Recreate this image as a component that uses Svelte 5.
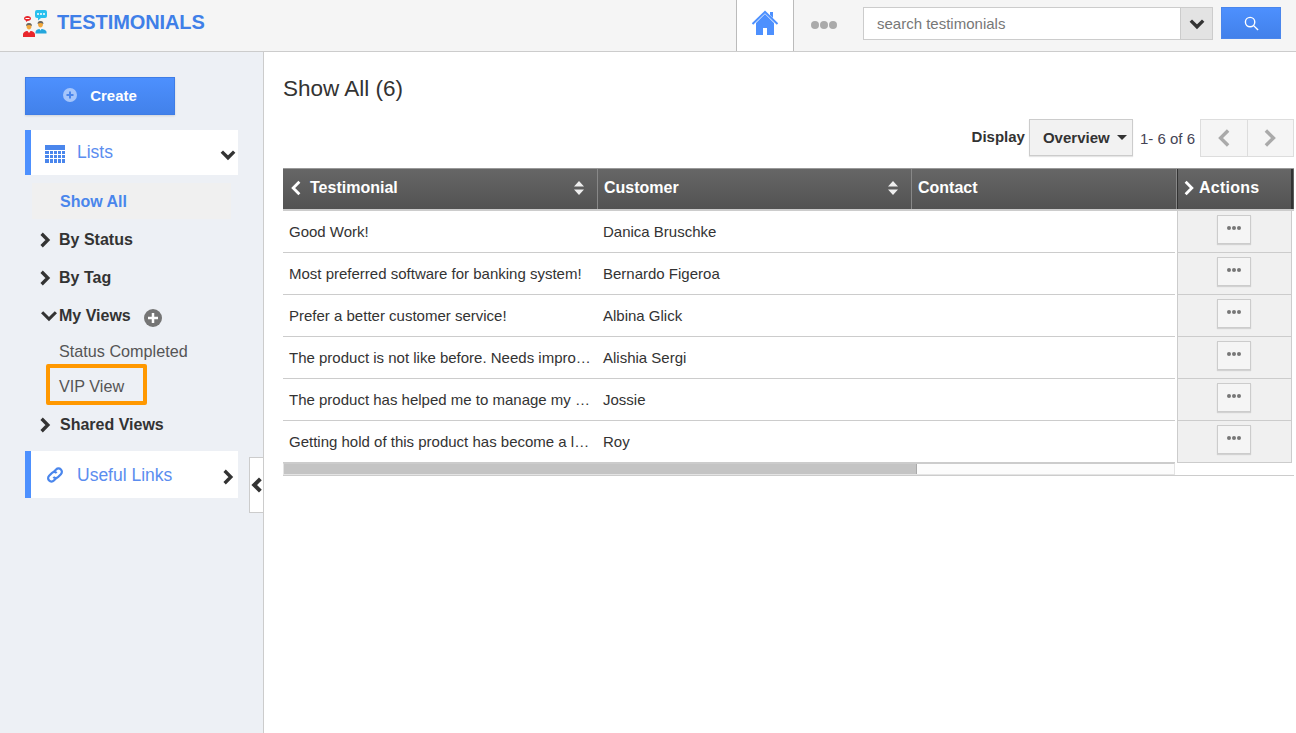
<script>
	const rows = [
		['Good Work!', 'Danica Bruschke'],
		['Most preferred software for banking system!', 'Bernardo Figeroa'],
		['Prefer a better customer service!', 'Albina Glick'],
		['The product is not like before. Needs improvement in many areas', 'Alishia Sergi'],
		['The product has helped me to manage my business better', 'Jossie'],
		['Getting hold of this product has become a life saver for us', 'Roy']
	];
</script>

{#snippet chevron(dir, cls)}
	<svg class={cls} viewBox="0 0 16 16" aria-hidden="true">
		{#if dir === 'right'}
			<path d="M5 2.500 10.500 8 5 13.500" />
		{:else if dir === 'left'}
			<path d="M11 2.500 5.500 8 11 13.500" />
		{:else}
			<path d="M2.500 5 8 10.500 13.500 5" />
		{/if}
	</svg>
{/snippet}

{#snippet sorter()}
	<svg class="sorter" viewBox="0 0 10 14" aria-hidden="true">
		<path d="M5 0 10 5.500H0ZM0 8.500H10L5 14Z" />
	</svg>
{/snippet}

<div class="page">
	<header class="topbar">
		<div class="brand">
			<svg class="logo" viewBox="0 0 25 27" aria-hidden="true">
				<path fill="#29c0ee" d="M14 0h8a2 2 0 0 1 2 2v4a2 2 0 0 1-2 2h-4l-3 2.500V8h-1a2 2 0 0 1-2-2V2a2 2 0 0 1 2-2z" />
				<circle cx="15" cy="4" r="1" fill="#fff" /><circle cx="18" cy="4" r="1" fill="#fff" /><circle cx="21" cy="4" r="1" fill="#fff" />
				<path fill="#e8262c" d="M4.500 6C6.500 6 8 7 8 8.500S6.500 11 4.500 11L3 12v-1.300C2 10.300 1 9.500 1 8.500 1 7 2.500 6 4.500 6z" />
				<rect x="2.500" y="8" width="4" height="1" fill="#fff" />
				<path fill="#f2a93c" d="M3.500 16a2.500 3 0 0 1 5 0c0 2-1 3.500-2.500 3.500S3.500 18 3.500 16z" />
				<path fill="#666" d="M3 16c0-2 1.200-3 3-3s3 1 3 3c-2-1.200-4-1.200-6 0z" />
				<path fill="#e8262c" d="M0 27v-2.500c0-2 2.500-3.500 4.500-3.500L6 23l1.500-2c2 0 4.500 1.500 4.500 3.500V27z" />
				<path fill="#f2a93c" d="M15 14a2.500 3 0 0 1 5 0c0 2-1 3.500-2.500 3.500S15 16 15 14z" />
				<path fill="#666" d="M14.500 14c0-2 1.200-3 3-3s3 1 3 3c-2-1.200-4-1.200-6 0z" />
				<path fill="#23a6dc" d="M12.500 23.500V22c0-2 2.500-3 4-3l1 1.500 1-1.500c1.500 0 5 1 5 3v1.500z" />
			</svg>
			<span class="brand-name">TESTIMONIALS</span>
		</div>
		<div class="top-right">
			<div class="home">
				<svg viewBox="0 0 28 28" aria-hidden="true">
					<path fill="#4d90fe" d="M5 14v12h7v-7h4v7h7V14L14 5z" />
					<path fill="none" stroke="#4d90fe" stroke-width="2" d="M1.500 15 14 3l12.500 12" />
					<path fill="#4d90fe" d="M19 3h3v6l-3-3z" />
				</svg>
			</div>
			<div class="dots"><i></i><i></i><i></i></div>
			<div class="search">
				<span class="search-text">search testimonials</span>
				<span class="search-drop">{@render chevron('down', 'chev-sm')}</span>
			</div>
			<button class="search-btn" aria-label="Search">
				<svg viewBox="0 0 16 16" aria-hidden="true">
					<circle cx="6.500" cy="6.500" r="5" />
					<path d="m10 10 5 5" />
				</svg>
			</button>
		</div>
	</header>

	<div class="body">
		<aside class="sidebar">
			<button class="create">
				<svg viewBox="0 0 14 14" aria-hidden="true">
					<circle cx="7" cy="7" r="7" fill="#a5c5fb" />
					<path d="M7 3.500v7M3.500 7h7" stroke="#4a86ec" stroke-width="2" />
				</svg>
				<span>Create</span>
			</button>

			<div class="panel lists">
				<svg class="panel-icon" viewBox="0 0 20 18" aria-hidden="true">
					<rect width="20" height="18" fill="#4a86ec" />
					<path stroke="#fff" stroke-width="1" d="M0 5.500h20M0 9.500h20M0 13.500h20M4.500 5v13M8.500 5v13M12.500 5v13M16.500 5v13" />
				</svg>
				<span>Lists</span>
				{@render chevron('down', 'chev-panel')}
			</div>

			<nav class="tree">
				<div class="current">Show All</div>
				<div class="branch">{@render chevron('right', 'chev')}By Status</div>
				<div class="branch">{@render chevron('right', 'chev')}By Tag</div>
				<div class="branch views">
					{@render chevron('down', 'chev')}My Views
					<svg class="add" viewBox="0 0 18 18" aria-hidden="true">
						<circle cx="9" cy="9" r="9" fill="#757575" />
						<path d="M9 4v10M4 9h10" stroke="#fff" stroke-width="2.500" />
					</svg>
				</div>
				<div class="leaf">Status Completed</div>
				<div class="leaf marked">VIP View</div>
				<div class="branch shared">{@render chevron('right', 'chev')}Shared Views</div>
			</nav>

			<div class="panel links">
				<svg class="panel-icon link-icon" viewBox="0 0 18 18" aria-hidden="true">
					<g fill="none" stroke="#4a86ec" stroke-width="2">
						<path d="M7.500 6.500 10 4a3 3 0 0 1 4.300 4.300l-2.500 2.500a3 3 0 0 1-4.300 0" />
						<path d="M10.500 11.500 8 14a3 3 0 0 1-4.300-4.300l2.500-2.500a3 3 0 0 1 4.300 0" />
					</g>
				</svg>
				<span>Useful Links</span>
				{@render chevron('right', 'chev-panel')}
			</div>

			<button class="collapse" aria-label="Collapse sidebar">{@render chevron('left', 'chev')}</button>
		</aside>

		<main class="content">
			<h1>Show All (6)</h1>

			<div class="toolbar">
				<span class="display-label">Display</span>
				<button class="overview">Overview<i class="caret"></i></button>
				<span class="count">1- 6 of 6</span>
				<div class="pager">
					<button aria-label="Previous">{@render chevron('left', 'chev-pager')}</button>
					<button aria-label="Next">{@render chevron('right', 'chev-pager')}</button>
				</div>
			</div>

			<div class="table">
				<div class="grid head">
					<div class="th first">{@render chevron('left', 'chev-head')}<span>Testimonial</span>{@render sorter()}</div>
					<div class="th"><span>Customer</span>{@render sorter()}</div>
					<div class="th"><span>Contact</span></div>
					<div class="th act">{@render chevron('right', 'chev-head')}<span>Actions</span></div>
				</div>
				{#each rows as row}
					<div class="grid row">
						<div class="td">{row[0]}</div>
						<div class="td">{row[1]}</div>
						<div class="td"></div>
						<div class="td act"><button class="more" aria-label="More"><i></i><i></i><i></i></button></div>
					</div>
				{/each}
				<div class="scroll"><div class="thumb"></div></div>
			</div>
		</main>
	</div>
</div>

<style>
	:global(body) {
		font-family: 'Liberation Sans', Arial, sans-serif;
		color: #333;
		background: #fff;
	}
	button {
		font-family: inherit;
		cursor: pointer;
	}
	.page {
		height: 733px;
		display: flex;
		flex-direction: column;
		overflow: hidden;
	}

	.topbar {
		height: 51px;
		flex: none;
		display: flex;
		justify-content: space-between;
		background: #f5f5f5;
		border-bottom: 1px solid #ccc;
	}
	.brand {
		display: flex;
		align-items: flex-start;
		padding: 10px 0 0 23px;
		gap: 9px;
	}
	.logo {
		width: 25px;
		height: 27px;
	}
	.brand-name {
		font-size: 20px;
		font-weight: 700;
		color: #3f7fe8;
		line-height: 25px;
		letter-spacing: -0.1px;
	}
	.top-right {
		display: flex;
		align-items: flex-start;
	}
	.home {
		width: 56px;
		height: 51px;
		box-sizing: content-box;
		background: #fff;
		border-left: 1px solid #bbb;
		border-right: 1px solid #bbb;
		display: flex;
		justify-content: center;
		align-items: flex-start;
	}
	.home svg {
		width: 28px;
		height: 28px;
		margin-top: 9px;
	}
	.dots {
		width: 69px;
		height: 50px;
		display: flex;
		align-items: center;
		box-sizing: border-box;
		padding-left: 17px;
		gap: 1px;
	}
	.dots i {
		width: 8px;
		height: 8px;
		border-radius: 50%;
		background: #aaa;
	}
	.search {
		margin-top: 7px;
		width: 348px;
		height: 31px;
		border: 1px solid #ccc;
		background: #fff;
		display: flex;
		align-items: center;
		justify-content: space-between;
		font-size: 15px;
		color: #777;
	}
	.search-text {
		padding-left: 13px;
	}
	.search-drop {
		width: 31px;
		height: 31px;
		background: #e3e3e3;
		border-left: 1px solid #ccc;
		display: flex;
		align-items: center;
		justify-content: center;
	}
	.search-btn {
		margin: 7px 15px 0 8px;
		width: 60px;
		height: 32px;
		padding: 0;
		background: linear-gradient(#4d90fe, #4281ea);
		border: 1px solid #4a86ec;
		display: flex;
		align-items: center;
		justify-content: center;
	}
	.search-btn svg {
		width: 15px;
		height: 15px;
		fill: none;
		stroke: #fff;
		stroke-width: 1.500;
	}

	.body {
		flex: 1;
		display: flex;
		min-height: 0;
	}
	.sidebar {
		position: relative;
		width: 264px;
		flex: none;
		box-sizing: border-box;
		background: #edf0f5;
		border-right: 1px solid #ccc;
		padding: 25px 25px 0;
	}
	.create {
		width: 150px;
		height: 38px;
		padding: 0 0 2px;
		background: linear-gradient(#4d90fe, #4281ea);
		border: 1px solid #3f7de6;
		color: #fff;
		font-size: 15px;
		font-weight: 700;
		display: flex;
		align-items: center;
		justify-content: center;
		gap: 13px;
		box-shadow: 0 1px 2px rgba(0, 0, 0, 0.12);
	}
	.create svg {
		width: 14px;
		height: 14px;
	}
	.panel {
		width: 213px;
		box-sizing: border-box;
		background: #fff;
		border-left: 6px solid #4d90fe;
		display: flex;
		align-items: center;
		font-size: 17.500px;
		color: #5b8def;
	}
	.lists {
		margin-top: 15px;
		height: 45px;
	}
	.links {
		margin-top: 7px;
		height: 47px;
	}
	.links span {
		padding-top: 1px;
	}
	.panel-icon {
		width: 20px;
		height: 18px;
		margin: 2px 12px 0 14px;
		flex: none;
	}
	.link-icon {
		height: 20px;
		margin: 1px 12px 0 14px;
	}
	.panel span {
		flex: 1;
	}
	.panel :global(.chev-panel) {
		width: 18px;
		height: 18px;
		margin: 5px 1px 0 0;
	}

	.tree {
		margin-top: 8px;
		display: flex;
		flex-direction: column;
		font-size: 16px;
		width: 213px;
	}
	.current {
		margin: 0 0 2px 7px;
		width: 199px;
		height: 36px;
		background: #f0f0f0;
		color: #4a86ec;
		font-weight: 700;
		line-height: 38px;
		padding-left: 28px;
		box-sizing: border-box;
	}
	.branch {
		display: flex;
		align-items: center;
		height: 38px;
		padding-left: 11px;
		font-weight: 700;
		color: #333;
	}
	.branch :global(.chev) {
		width: 18px;
		height: 18px;
		margin-right: 5px;
		flex: none;
	}
	.branch.views {
		padding-left: 14px;
	}
	.branch.views :global(.chev) {
		margin-right: 0;
		width: 20px;
		height: 20px;
		stroke-width: 2.500;
	}
	.add {
		width: 18px;
		height: 18px;
		margin: 3px 0 0 13px;
	}
	.leaf {
		font-size: 16.200px;
		color: #555;
		margin-left: 34px;
		margin-top: -1px;
		height: 35px;
		line-height: 35px;
	}
	.marked {
		margin: -5px 0 1px 21px;
		width: 101px;
		height: 41px;
		box-sizing: border-box;
		border: 4px solid #ff9800;
		border-radius: 2px;
		padding-left: 9px;
		line-height: 36px;
	}
	.branch.shared :global(.chev) {
		margin-right: 6px;
	}

	.collapse {
		position: absolute;
		top: 405px;
		right: 0;
		width: 14px;
		height: 56px;
		padding: 0;
		background: #fff;
		border: 1px solid #ccc;
		border-right: 0;
		display: flex;
		align-items: center;
		justify-content: flex-start;
		overflow: hidden;
	}
	.collapse :global(.chev) {
		width: 18px;
		height: 18px;
		flex: none;
		margin-left: -2px;
		stroke-width: 3.500;
	}

	:global(.chev),
	:global(.chev-sm),
	:global(.chev-panel),
	:global(.chev-head),
	:global(.chev-pager) {
		fill: none;
		stroke: #333;
		stroke-width: 3;
	}
	:global(.chev-sm) {
		width: 18px;
		height: 18px;
	}

	.content {
		flex: 1;
		min-width: 0;
		padding: 0 2px 0 19px;
	}
	h1 {
		margin: 0;
		padding-top: 23px;
		font-size: 22.500px;
		font-weight: 400;
		line-height: 27px;
		color: #333;
	}
	.toolbar {
		margin-top: 17px;
		height: 38px;
		display: flex;
		align-items: flex-start;
		justify-content: flex-end;
		font-size: 15px;
	}
	.display-label {
		font-weight: 700;
		line-height: 36px;
		margin-right: 4px;
	}
	.overview {
		width: 104px;
		height: 37px;
		padding: 0 5px 0 13px;
		text-align: left;
		background: #f2f2f2;
		border: 1px solid #ccc;
		box-shadow: 0 1px 1px rgba(0, 0, 0, 0.1);
		font-size: 15px;
		font-weight: 700;
		color: #333;
		display: flex;
		align-items: center;
		justify-content: space-between;
	}
	.caret {
		border: 5px solid transparent;
		border-top-color: #333;
		border-bottom-width: 0;
	}
	.count {
		margin: 0 5px 0 7px;
		line-height: 39px;
		color: #445;
	}
	.pager {
		display: flex;
	}
	.pager button {
		width: 48px;
		height: 38px;
		padding: 0;
		background: #f5f5f5;
		border: 1px solid #ddd;
		display: flex;
		align-items: center;
		justify-content: center;
	}
	.pager button + button {
		border-left: 0;
		width: 46px;
		padding-right: 2px;
	}
	.pager :global(.chev-pager) {
		width: 22px;
		height: 22px;
		stroke: #aaa;
		stroke-width: 2.500;
	}

	.table {
		margin-top: 11px;
		width: 1011px;
		border-bottom: 1px solid #ccc;
	}
	.grid {
		display: grid;
		grid-template-columns: 315px 314px 265px 116px;
	}
	.head {
		height: 43px;
		background: linear-gradient(#666, #525252);
		border-top: 1px solid #999;
		border-bottom: 2px solid #ccc;
		box-sizing: border-box;
		color: #fff;
		font-size: 16px;
		font-weight: 700;
	}
	.th {
		display: flex;
		align-items: center;
		gap: 6px;
		padding: 0 12px 2px 6px;
		border-right: 1px solid #888;
	}
	.th.first {
		padding-left: 4px;
		gap: 5px;
	}
	.th span {
		flex: 1;
	}
	.th.act {
		gap: 1px;
		padding: 0 0 2px 2px;
		letter-spacing: 0.25px;
		border-left: 1px solid #333;
		border-right: 2px solid #333;
	}
	.th :global(.chev-head) {
		width: 18px;
		height: 18px;
		stroke: #fff;
		stroke-width: 2.500;
		flex: none;
	}
	.sorter {
		width: 10px;
		height: 14px;
		fill: #eee;
		flex: none;
		margin-right: 1px;
	}
	.row {
		height: 42px;
		font-size: 15px;
		color: #333;
	}
	.td {
		display: flex;
		align-items: center;
		padding: 0 6px;
		border-bottom: 1px solid #ccc;
		overflow: hidden;
		white-space: nowrap;
	}
	.td:nth-child(1),
	.td:nth-child(2) {
		display: block;
		line-height: 41px;
		text-overflow: ellipsis;
	}
	.td:nth-child(2) {
		padding-left: 5px;
	}
	.td:nth-child(3) {
		margin-right: 2px;
	}
	.td.act {
		justify-content: center;
		padding: 0 7px 0 5px;
		background: #f0f0f0;
		border: 1px solid #ccc;
		border-top: 0;
		margin-right: 1px;
	}
	.more {
		width: 34px;
		height: 29px;
		margin-bottom: 4px;
		padding: 0 0 3px;
		background: #f5f5f5;
		border: 1px solid #ccc;
		box-shadow: 0 1px 1px rgba(0, 0, 0, 0.12);
		display: flex;
		align-items: center;
		justify-content: center;
		gap: 1px;
	}
	.more i {
		width: 4px;
		height: 4px;
		border-radius: 50%;
		background: #777;
	}
	.scroll {
		width: 892px;
		height: 12px;
		box-sizing: border-box;
		background: #fcfcfc;
		border: 1px solid #e4e4e4;
		border-top-color: #ccc;
	}
	.thumb {
		width: 632px;
		height: 100%;
		background: #c4c4c4;
		border-right: 1px solid #aaa;
	}
</style>
